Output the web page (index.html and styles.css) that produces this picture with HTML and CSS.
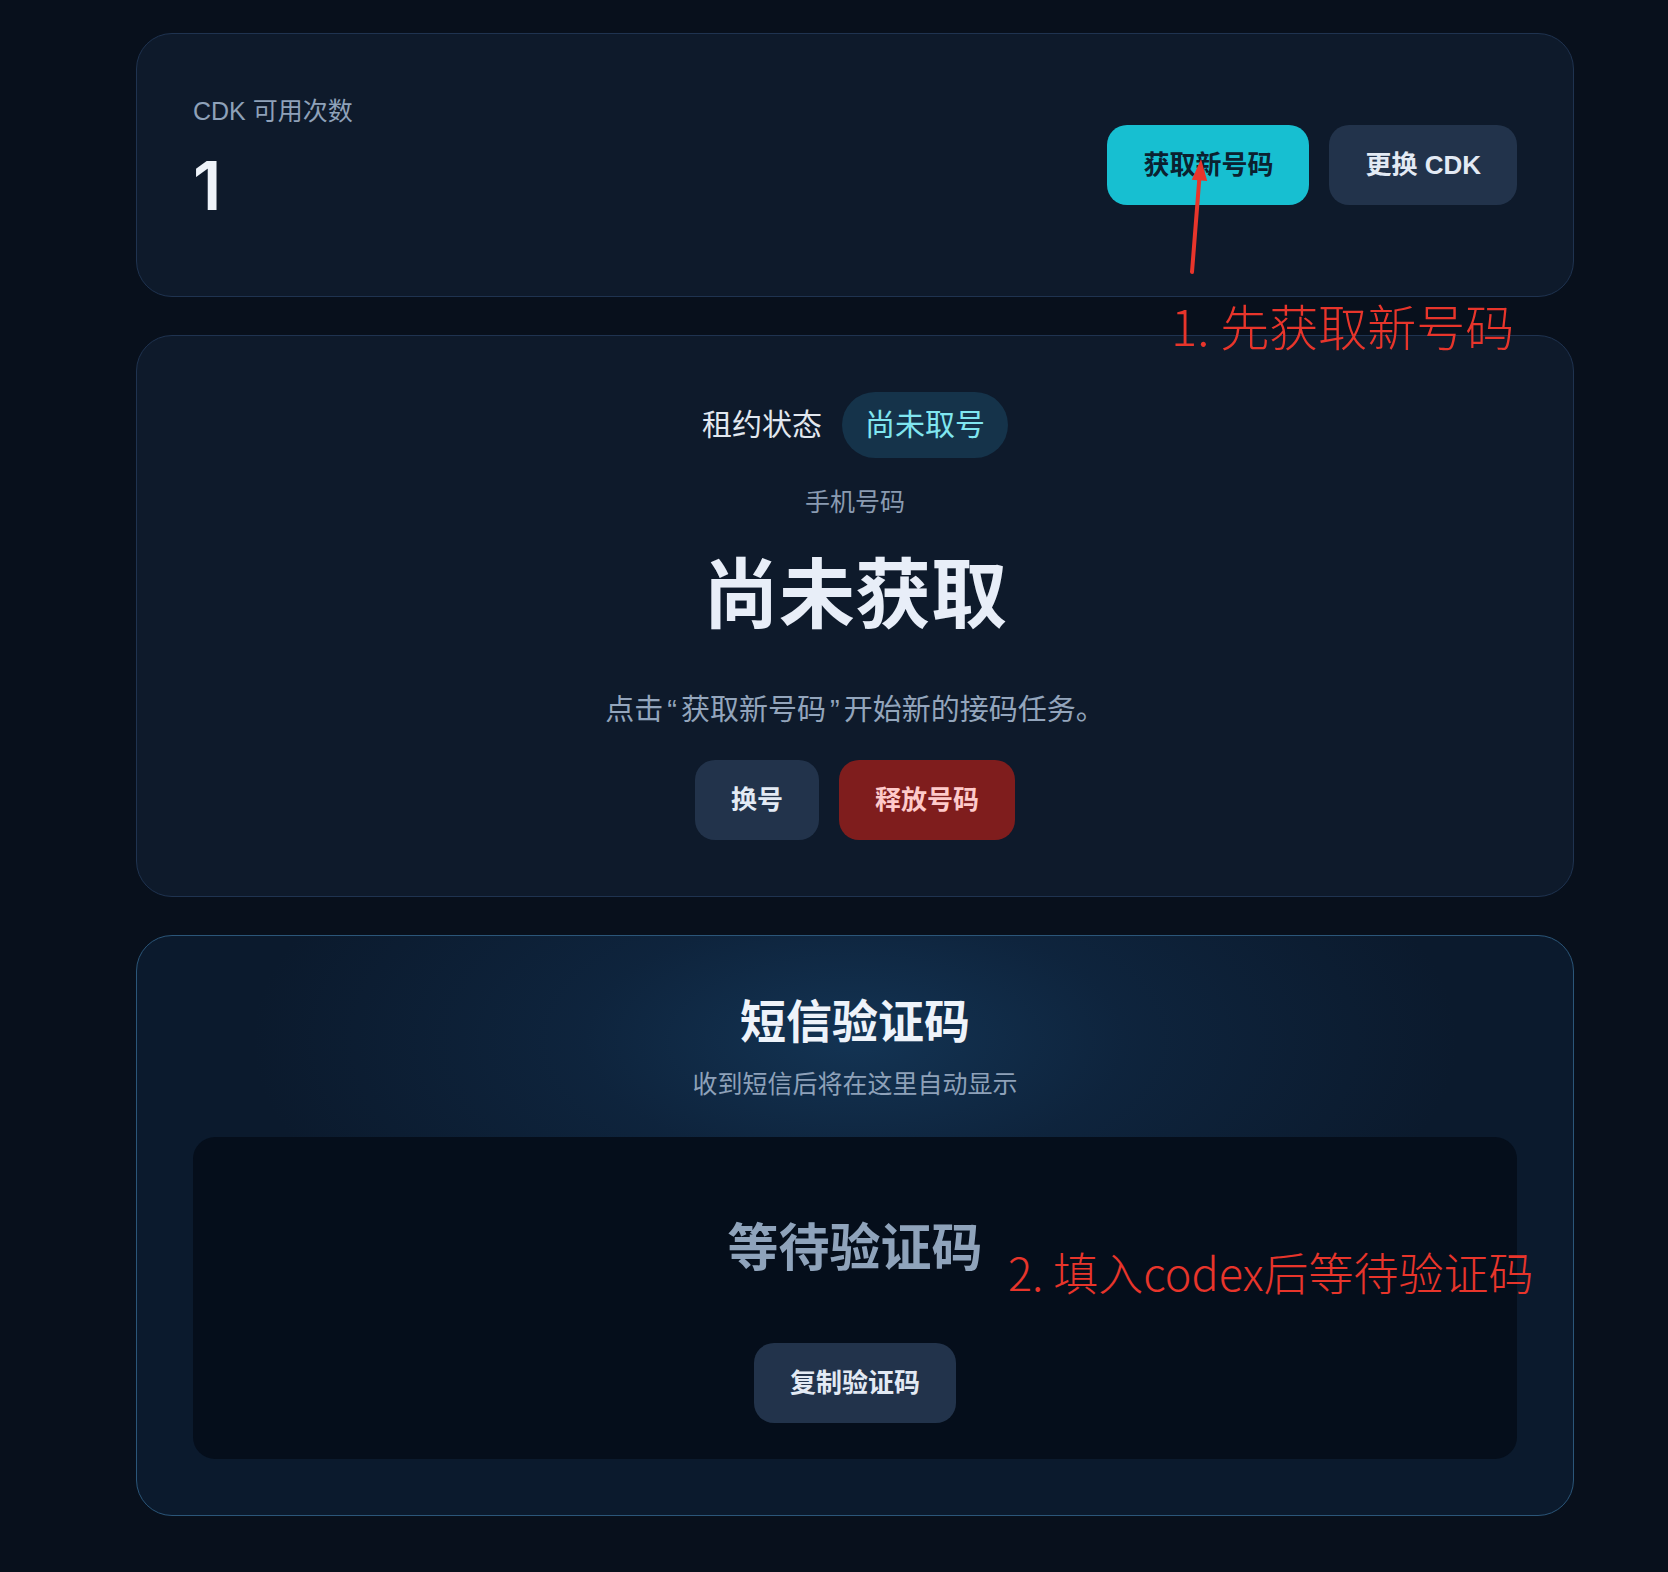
FILE: index.html
```html
<!DOCTYPE html>
<html lang="zh-CN">
<head>
<meta charset="utf-8">
<title>接码</title>
<link rel="stylesheet" href="styles.css">
</head>
<body>
<div class="page">
  <section class="card card-cdk">
    <div class="cdk-info">
      <div class="cdk-label">CDK 可用次数</div>
      <div class="cdk-count">1</div>
    </div>
    <div class="cdk-actions">
      <button class="btn btn-primary">获取新号码</button>
      <button class="btn btn-secondary">更换 CDK</button>
    </div>
  </section>

  <section class="card card-number">
    <div class="status-row">
      <span class="status-label">租约状态</span>
      <span class="status-pill">尚未取号</span>
    </div>
    <div class="phone-label">手机号码</div>
    <div class="phone-value">尚未获取</div>
    <p class="phone-hint">点击<span class="quote">“</span>获取新号码<span class="quote">”</span>开始新的接码任务。</p>
    <div class="number-actions">
      <button class="btn btn-secondary">换号</button>
      <button class="btn btn-danger">释放号码</button>
    </div>
  </section>

  <section class="card card-sms">
    <h2 class="sms-title">短信验证码</h2>
    <p class="sms-sub">收到短信后将在这里自动显示</p>
    <div class="sms-box">
      <div class="sms-code">等待验证码</div>
      <button class="btn btn-secondary">复制验证码</button>
    </div>
  </section>

  <svg class="anno-arrow" width="50" height="130" viewBox="0 0 50 130">
    <line x1="22" y1="122" x2="29.4" y2="28" stroke="#e8352b" stroke-width="4" stroke-linecap="round"/>
    <polygon points="31,9 37.2,31 21.8,29.8" fill="#e8352b"/>
  </svg>
  <div class="anno anno-1">1. 先获取新号码</div>
  <div class="anno anno-2">2. 填入codex后等待验证码</div>
</div>
</body>
</html>
```

FILE: styles.css
```css
* {
  box-sizing: border-box;
}

html, body {
  margin: 0;
  padding: 0;
  background: #08101c;
}

body {
  font-family: "Liberation Sans", "Noto Sans CJK SC", sans-serif;
  color: #e2e8f0;
  min-height: 1572px;
}

.page {
  position: relative;
  margin-left: 136px;
  width: 1438px;
  padding-top: 33px;
  display: flex;
  flex-direction: column;
  gap: 38px;
}

.card {
  background: #0e1a2b;
  border: 1px solid #1f3350;
  border-radius: 36px;
  padding: 56px;
}

/* ---------- CDK card ---------- */
.card-cdk {
  display: flex;
  align-items: center;
  justify-content: space-between;
}

.cdk-info {
  display: flex;
  flex-direction: column;
}

.cdk-label {
  font-size: 25px;
  line-height: 42px;
  color: #8ea1b9;
}

.cdk-count {
  font-family: "Inter", "Liberation Sans", sans-serif;
  font-size: 67px;
  line-height: 108px;
  font-weight: 600;
  color: #eef3fa;
}

.cdk-actions {
  display: flex;
  gap: 20px;
}

/* ---------- buttons ---------- */
.btn {
  font-family: "Liberation Sans", "Noto Sans CJK SC", sans-serif;
  font-size: 26px;
  font-weight: 700;
  height: 80px;
  padding: 0 36px;
  border: none;
  border-radius: 20px;
  cursor: pointer;
  line-height: 80px;
}

.btn-primary {
  background: #17bfd1;
  color: #0b2130;
}

.btn-secondary {
  background: #22334b;
  color: #e3eaf4;
}

.btn-danger {
  background: #7f1d1d;
  color: #fecaca;
}

/* ---------- number card ---------- */
.card-number {
  display: flex;
  flex-direction: column;
  align-items: center;
}

.status-row {
  display: flex;
  align-items: center;
  gap: 20px;
}

.status-label {
  font-size: 30px;
  line-height: 66px;
  color: #e2e8f0;
}

.status-pill {
  font-size: 30px;
  line-height: 66px;
  height: 66px;
  padding: 0 23px;
  border-radius: 33px;
  background: #15334a;
  color: #80e6f0;
}

.phone-label {
  margin-top: 26px;
  font-size: 25px;
  line-height: 36px;
  color: #8a9bb1;
}

.phone-value {
  margin-top: 30px;
  font-size: 76px;
  line-height: 91px;
  font-weight: 700;
  color: #e8eef8;
}

.phone-hint {
  margin: 48px 0 0;
  font-size: 29px;
  line-height: 42px;
  color: #93a5bc;
}

.phone-hint .quote {
  font-family: "Liberation Sans", sans-serif;
  margin: 0 4px;
}

.number-actions {
  margin-top: 29px;
  display: flex;
  gap: 20px;
}

/* ---------- sms card ---------- */
.card-sms {
  border-color: #2b5679;
  background:
    radial-gradient(ellipse 42% 48% at 50% 18%, rgba(22, 60, 96, 0.75) 0%, rgba(18, 48, 80, 0.45) 45%, rgba(11, 26, 45, 0) 100%),
    #0b1a2d;
  display: flex;
  flex-direction: column;
  align-items: stretch;
}

.sms-title {
  margin: 0;
  text-align: center;
  font-size: 46px;
  line-height: 60px;
  font-weight: 700;
  color: #eef3fa;
}

.sms-sub {
  margin: 14px 0 0;
  text-align: center;
  font-size: 25px;
  line-height: 36px;
  color: #8ea1b9;
}

.sms-box {
  margin-top: 35px;
  background: #050e1b;
  border-radius: 22px;
  padding: 36px;
  display: flex;
  flex-direction: column;
  align-items: center;
}

.sms-code {
  margin-top: 4px;
  height: 143px;
  line-height: 143px;
  font-size: 51px;
  font-weight: 700;
  color: #8fa3bb;
}

.sms-box .btn {
  margin-top: 23px;
}

/* ---------- annotations (overlay) ---------- */
.anno-arrow {
  position: absolute;
  left: 1034px;
  top: 150px;
}

.anno {
  position: absolute;
  font-family: "Noto Sans CJK SC", sans-serif;
  font-weight: 300;
  color: #e8352b;
  line-height: 1;
  white-space: nowrap;
}

.anno-1 {
  left: 1035px;
  top: 300px;
  font-size: 49px;
}

.anno-2 {
  left: 872px;
  top: 1249px;
  font-size: 45px;
}
```
